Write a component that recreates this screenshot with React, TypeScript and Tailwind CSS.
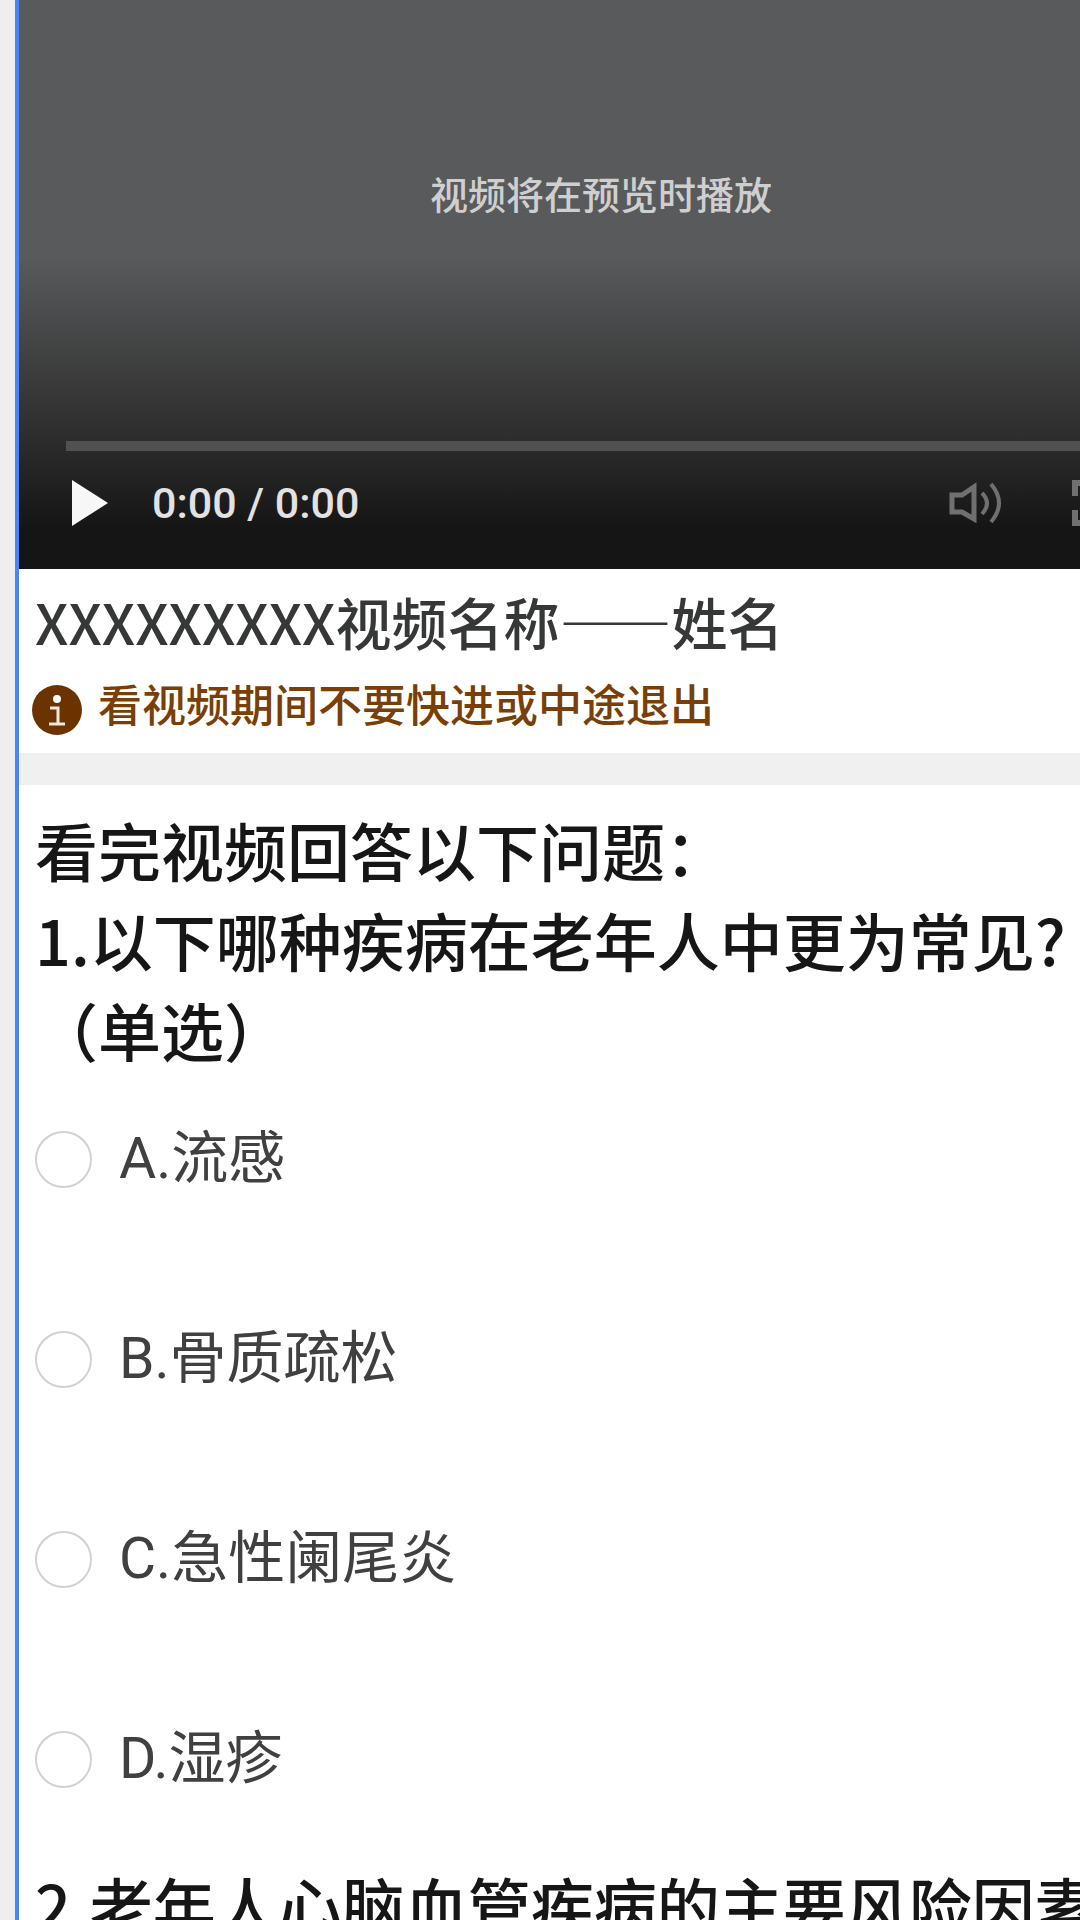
import { useState } from 'react';

interface Option {
  id: string;
  label: string;
}

const options: Option[] = [
  { id: 'A', label: '流感' },
  { id: 'B', label: '骨质疏松' },
  { id: 'C', label: '急性阑尾炎' },
  { id: 'D', label: '湿疹' },
];

const VideoPlayer = () => (
  <section className="flex h-[569px] flex-col bg-[#595a5c] bg-linear-to-b from-[#595a5c] from-45% via-[#2d2d2d] via-77% to-[#151515] to-93%">
    <div className="flex flex-1 items-start justify-center pt-[165px]">
      <p className="text-[38px] leading-[56px] font-medium text-[#cfcfcf]">视频将在预览时播放</p>
    </div>

    <div className="px-[47px] pb-[37px]">
      <input
        type="range"
        min={0}
        max={100}
        defaultValue={0}
        aria-label="播放进度"
        className="block h-[10px] w-full appearance-none bg-[#50524f] [&::-webkit-slider-thumb]:appearance-none"
      />
      <div className="mt-[23px] flex h-[58px] items-center pr-[18px] pl-[6px]">
        <button type="button" aria-label="播放">
          <svg width="36" height="46" viewBox="0 0 36 46" fill="#f7f7f7">
            <path d="M0 0L36 23L0 46Z" />
          </svg>
        </button>
        <span className="ml-[44px] font-[Roboto] text-[43px] leading-[58px] font-medium text-[#e2e2e2]">0:00 / 0:00</span>
        <button type="button" aria-label="音量" className="ml-auto">
          <svg width="56" height="44" viewBox="0 0 56 44" fill="none" stroke="#707070" strokeWidth="5">
            <path d="M4 14H14L26 6V38L14 31H4Z" />
            <path d="M34 12Q44 22 34 33" strokeWidth="4" />
            <path d="M43 3Q59 22 43 41" strokeWidth="4" />
          </svg>
        </button>
        <button type="button" aria-label="全屏" className="ml-[68px]">
          <svg width="46" height="46" viewBox="0 0 46 46" fill="none" stroke="#707070" strokeWidth="6">
            <path d="M3 16V3H16M30 3H43V16M43 30V43H30M16 43H3V30" />
          </svg>
        </button>
      </div>
    </div>
  </section>
);

const InfoIcon = () => (
  <svg width="50" height="50" viewBox="0 0 50 50" className="shrink-0">
    <circle cx="25" cy="25" r="25" fill="#6b3300" />
    <circle cx="25" cy="14" r="4" fill="#ffffff" />
    <path d="M18 23H26V39M17 39H33" fill="none" stroke="#f3e6da" strokeWidth="3" />
  </svg>
);

const App = () => {
  const [selected, setSelected] = useState('');

  return (
    <div lang="zh-CN" className="h-screen overflow-hidden bg-[#eeeeee] pl-[15px] font-['Noto_Sans_CJK_SC',sans-serif]">
      <main className="-mr-[103px] h-full border-l-4 border-[#4a85f6] bg-white">
        <VideoPlayer />

        <section className="px-4 pt-[10px] pb-[18px]">
          <h1 className="text-[56px] leading-[84px] font-medium text-[#353837]">XXXXXXXXX视频名称——姓名</h1>
          <div className="-ml-[3px] mt-2 flex h-[64px] items-end gap-4">
            <InfoIcon />
            <p className="text-[44px] leading-[64px] font-medium text-[#793f06]">看视频期间不要快进或中途退出</p>
          </div>
        </section>

        <div className="h-8 bg-[#f0f0f0]" />

        <section className="px-4 pt-[19px] text-[63px] leading-[90px] font-medium text-[#161616]">
          <h2>看完视频回答以下问题：</h2>
          <fieldset>
            <legend>1.以下哪种疾病在老年人中更为常见?（单选）</legend>
            <div className="flex flex-col gap-[50px] pt-[35px] font-[Roboto,'Noto_Sans_CJK_SC',sans-serif] text-[57px] font-normal text-[#404040]">
              {options.map((option) => (
                <label key={option.id} className="flex h-[150px] items-start gap-[27px] leading-[100px]">
                  <input
                    type="radio"
                    name="question-1"
                    value={option.id}
                    checked={selected === option.id}
                    onChange={() => setSelected(option.id)}
                    className="mt-[22px] size-[57px] shrink-0 appearance-none rounded-full border-2 border-[#d2d2d2] bg-white checked:border-[16px] checked:border-[#4a85f6]"
                  />
                  <span>{option.id}.{option.label}</span>
                </label>
              ))}
            </div>
          </fieldset>
          <h2>2.老年人心脑血管疾病的主要风险因素</h2>
        </section>
      </main>
    </div>
  );
};

export default App;
